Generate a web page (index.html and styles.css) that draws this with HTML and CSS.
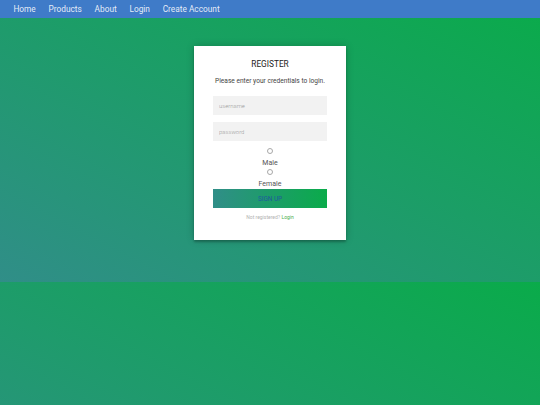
FILE: index.html
```html
<!DOCTYPE html>
<html lang="en">
<head>
<meta charset="utf-8">
<title>Register</title>
<link rel="stylesheet" href="styles.css">
</head>
<body>
<nav class="topnav">
  <a href="#">Home</a>
  <a href="#">Products</a>
  <a href="#">About</a>
  <a href="#">Login</a>
  <a href="#">Create Account</a>
</nav>
<main class="page">
  <div class="card">
    <h2 class="title">REGISTER</h2>
    <p class="subtitle">Please enter your credentials to login.</p>
    <form class="form">
      <input class="field" type="text" placeholder="username">
      <input class="field" type="password" placeholder="password">
      <div class="choice">
        <input class="radio" type="radio" name="g" id="male">
        <label class="choice-label" for="male">Male</label>
        <input class="radio" type="radio" name="g" id="female">
        <label class="choice-label" for="female">Female</label>
      </div>
      <button class="btn" type="button">Sign up</button>
      <p class="message">Not registered? <a href="#">Login</a></p>
    </form>
  </div>
</main>
</body>
</html>
```

FILE: styles.css
```css
html {
  margin: 0;
}
body {
  margin: 0;
  font-family: Roboto, "Liberation Sans", sans-serif;
  background: linear-gradient(to top right, #308e88, #0aab4a);
}
.topnav {
  display: flex;
  align-items: center;
  height: 17.5px;
  padding-left: 7px;
  background: #3f7bc8;
}
.topnav a {
  padding: 0 6.4px;
  color: rgba(255, 255, 255, 0.88);
  font-size: 8.3px;
  font-weight: 400;
  text-decoration: none;
}
.page {
  display: flex;
  justify-content: center;
  padding: 28.5px 0 42px;
}
.card {
  width: 114px;
  padding: 13px 19px 20px;
  background: #ffffff;
  text-align: center;
  box-shadow: 0 0 8px 0 rgba(0, 0, 0, 0.2), 0 2px 2px 0 rgba(0, 0, 0, 0.24);
}
.title {
  margin: 0;
  font-size: 8.3px;
  line-height: 11px;
  font-weight: 400;
  color: #222;
}
.subtitle {
  margin: 6.5px 0 0;
  font-size: 6.6px;
  line-height: 9px;
  color: #444;
}
.form {
  display: flex;
  flex-direction: column;
  margin-top: 10.5px;
}
.field {
  box-sizing: border-box;
  width: 100%;
  height: 19px;
  margin: 0 0 7px;
  padding: 0 6px;
  border: 0;
  outline: 0;
  background: #f2f2f2;
  font-family: inherit;
  font-size: 5.9px;
  font-weight: 300;
  color: #333;
}
.field:last-of-type {
  margin-bottom: 6px;
}
.field::placeholder {
  color: #9a9a9a;
}
.choice {
  display: flex;
  flex-direction: column;
  align-items: center;
}
.radio {
  appearance: none;
  box-sizing: border-box;
  width: 6px;
  height: 6px;
  margin: 1px 0 0;
  border: 0.6px solid #a8a8a8;
  border-radius: 50%;
  background: #fff;
}
.radio + .choice-label + .radio {
  margin-top: 0;
}
.choice-label {
  margin-top: 3px;
  font-size: 7px;
  line-height: 12px;
  color: #555;
}
.btn {
  height: 19px;
  margin-top: -1px;
  padding: 0;
  border: 0;
  background: linear-gradient(to right, #308e88, #0aab4a);
  color: #1e5a9e;
  font-family: inherit;
  font-size: 6.4px;
  text-transform: uppercase;
}
.message {
  margin: 6px 0 0;
  font-size: 5px;
  line-height: 6px;
  color: #b3b3b3;
}
.message a {
  color: #4caf50;
  text-decoration: none;
}
```
